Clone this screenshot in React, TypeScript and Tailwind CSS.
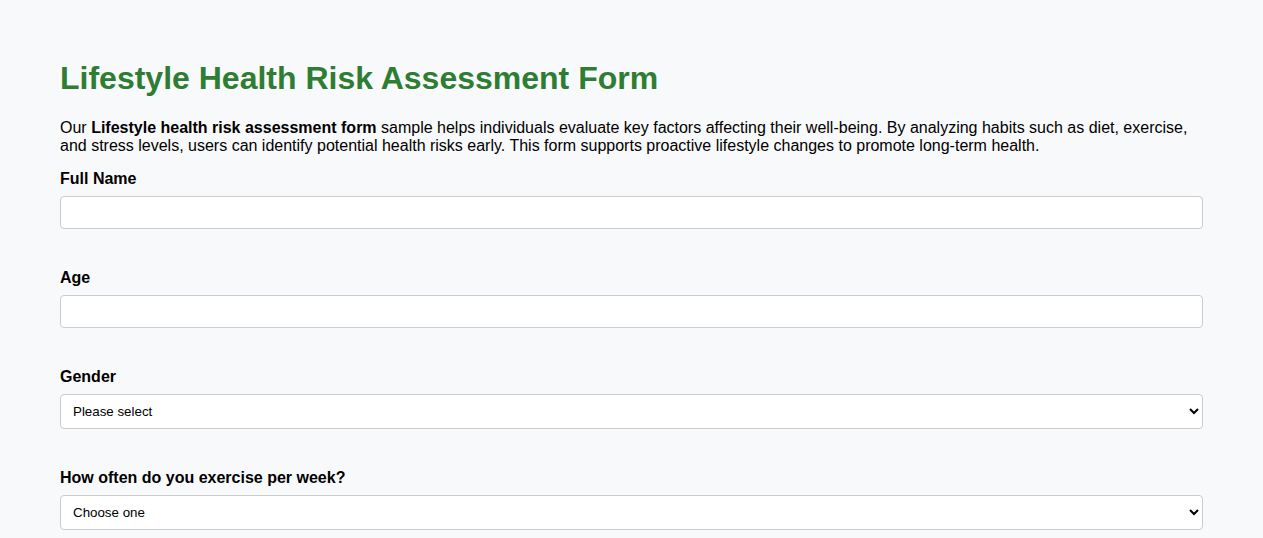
export default function App() {
    return (
        <div className="min-h-screen bg-[#f8f9fa] px-[60px] pt-[39px] font-['Liberation_Sans',Arial,sans-serif] leading-[normal] text-black">
            <h1 className="my-[21.44px] text-[32px] font-bold leading-[normal] text-[#2e7d32]">
                Lifestyle Health Risk Assessment Form
            </h1>
            <p className="mt-4 mb-[15px] text-[16px] leading-[normal]">
                Our <strong>Lifestyle health risk assessment form</strong> sample helps individuals evaluate key factors affecting their well-being. By analyzing habits such as diet, exercise, and stress levels, users can identify potential health risks early. This form supports proactive lifestyle changes to promote long-term health.
            </p>

            <form>
                {/* Full name */}
                <div className="mb-[40px]">
                    <label className="mb-2 block font-bold">Full Name</label>
                    <input
                        type="text"
                        className="block h-[33px] w-full rounded-[4px] border border-[#ccc] bg-white px-2 text-[13.33px]"
                    />
                </div>

                {/* Age */}
                <div className="mb-[40px]">
                    <label className="mb-2 block font-bold">Age</label>
                    <input
                        type="number"
                        className="block h-[33px] w-full rounded-[4px] border border-[#ccc] bg-white px-2 text-[13.33px]"
                    />
                </div>

                {/* Gender */}
                <div className="mb-[40px]">
                    <label className="mb-2 block font-bold">Gender</label>
                    <select className="block h-[35px] w-full rounded-[4px] border border-[#ccc] bg-white px-2 text-[13.33px]">
                        <option>Please select</option>
                        <option>Male</option>
                        <option>Female</option>
                        <option>Other</option>
                    </select>
                </div>

                {/* Exercise */}
                <div className="mb-[40px]">
                    <label className="mb-2 block font-bold">How often do you exercise per week?</label>
                    <select className="block h-[35px] w-full rounded-[4px] border border-[#ccc] bg-white px-2 text-[13.33px]">
                        <option>Choose one</option>
                        <option>Never</option>
                        <option>1-2 times</option>
                        <option>3-4 times</option>
                        <option>5+ times</option>
                    </select>
                </div>
            </form>
        </div>
    );
}
